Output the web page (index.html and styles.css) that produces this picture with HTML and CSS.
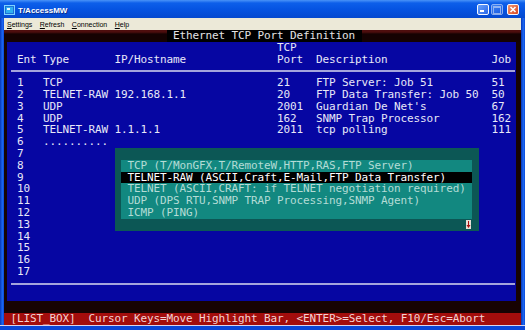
FILE: index.html
```html
<!DOCTYPE html>
<html lang="en">

<head>
    <meta charset="UTF-8">
    <meta name="viewport" content="width=device-width, initial-scale=1.0">
    <title>T/AccessMW</title>
    <link rel="stylesheet" href="styles.css">
</head>

<body>
    <div class="window">
        <div class="titlebar">
            <svg class="app-icon" viewBox="0 0 11 10">
                <rect x="0.5" y="0.5" width="10" height="9" fill="#1d6fd8" stroke="#7fd4ff" />
                <rect x="2" y="2" width="7" height="6" fill="#30b0f0" />
                <rect x="3" y="3" width="3" height="2" fill="#e8f6ff" />
            </svg>
            <span class="title">T/AccessMW</span>
            <div class="caption-buttons">
                <span class="cap-btn min"></span>
                <span class="cap-btn max"></span>
                <span class="cap-btn close">
                    <svg viewBox="0 0 10 9">
                        <path d="M2.5 2 L7.5 7 M7.5 2 L2.5 7" stroke="#fff" stroke-width="1.6" />
                    </svg>
                </span>
            </div>
        </div>

        <div class="body">
            <div class="frame-side"></div>
            <div class="client">
                <nav class="menubar">
                    <span><u>S</u>ettings</span>
                    <span><u>R</u>efresh</span>
                    <span><u>C</u>onnection</span>
                    <span><u>H</u>elp</span>
                </nav>

                <div class="console">
                    <div class="console-top">
                        <span class="screen-title">Ethernet TCP Port Definition</span>
                    </div>

                    <div class="panel">
                        <div class="cols head">
                            <span>Ent</span>
                            <span>Type</span>
                            <span>IP/Hostname</span>
                            <span>TCP<br>Port</span>
                            <span>Description</span>
                            <span>Job</span>
                        </div>
                        <div class="rule"></div>

                        <div class="entries">
                            <div class="cols"><span>1</span><span>TCP</span><span></span><span>21</span><span>FTP Server: Job 51</span><span>51</span></div>
                            <div class="cols"><span>2</span><span>TELNET-RAW</span><span>192.168.1.1</span><span>20</span><span>FTP Data Transfer: Job 50</span><span>50</span></div>
                            <div class="cols"><span>3</span><span>UDP</span><span></span><span>2001</span><span>Guardian De Net's</span><span>67</span></div>
                            <div class="cols"><span>4</span><span>UDP</span><span></span><span>162</span><span>SNMP Trap Processor</span><span>162</span></div>
                            <div class="cols"><span>5</span><span>TELNET-RAW</span><span>1.1.1.1</span><span>2011</span><span>tcp polling</span><span>111</span></div>
                            <div class="cols"><span>6</span><span>..........</span></div>
                            <div class="cols"><span>7</span></div>
                            <div class="cols"><span>8</span></div>
                            <div class="cols"><span>9</span></div>
                            <div class="cols"><span>10</span></div>
                            <div class="cols"><span>11</span></div>
                            <div class="cols"><span>12</span></div>
                            <div class="cols"><span>13</span></div>
                            <div class="cols"><span>14</span></div>
                            <div class="cols"><span>15</span></div>
                            <div class="cols"><span>16</span></div>
                            <div class="cols"><span>17</span></div>
                        </div>

                        <div class="rule"></div>
                        <div class="blank"></div>

                        <!-- type picker popup -->
                        <div class="listbox">
                            <div class="item">TCP (T/MonGFX,T/RemoteW,HTTP,RAS,FTP Server)</div>
                            <div class="item selected">TELNET-RAW (ASCII,Craft,E-Mail,FTP Data Transfer)</div>
                            <div class="item">TELNET (ASCII,CRAFT: if TELNET negotiation required)</div>
                            <div class="item">UDP (DPS RTU,SNMP TRAP Processing,SNMP Agent)</div>
                            <div class="item">ICMP (PING)</div>
                            <div class="listbox-foot">
                                <span class="scroll-arrow">
                                    <svg viewBox="0 0 5 9">
                                        <rect width="5" height="9" fill="#e6ded6" />
                                        <path d="M2 1 H3 V5 H4.5 L2.5 8 L0.5 5 H2 Z" fill="#a81010" />
                                    </svg>
                                </span>
                            </div>
                        </div>
                    </div>

                    <div class="console-shadow"></div>
                    <div class="status">[LIST_BOX]  Cursor Keys=Move Highlight Bar, &lt;ENTER&gt;=Select, F10/Esc=Abort</div>
                </div>
            </div>
            <div class="frame-side"></div>
        </div>
        <div class="frame-bottom"></div>
    </div>
</body>

</html>
```

FILE: styles.css
```css
* {
    margin: 0;
    padding: 0;
    box-sizing: border-box;
}

body {
    width: 525px;
    height: 330px;
    overflow: hidden;
    font-family: "Liberation Sans", Arial, sans-serif;
    background-color: #0a46d8;
}

.window {
    width: 525px;
    height: 330px;
    display: flex;
    flex-direction: column;
}

/* XP style caption */
.titlebar {
    height: 18px;
    display: flex;
    align-items: center;
    padding: 0 6px 0 4px;
    background: linear-gradient(#4a93f8 0, #0d5fea 3px, #0654e2 9px, #0549cf 100%);
    color: #fff;
}

.app-icon {
    width: 11px;
    height: 10px;
    margin-top: 2px;
}

.title {
    margin-left: 3px;
    padding-top: 2px;
    font-size: 8px;
    font-weight: bold;
    text-shadow: 1px 1px #0b2f8e;
}

.caption-buttons {
    margin-left: auto;
    display: flex;
    gap: 2px;
    margin-top: 1px;
}

.cap-btn {
    width: 12px;
    height: 11px;
    border: 1px solid #f4f8ff;
    border-radius: 2px;
    background: linear-gradient(135deg, #6aa2fa, #2866ea);
    display: flex;
    align-items: center;
    justify-content: center;
}

.cap-btn.min {
    align-items: flex-end;
    justify-content: flex-start;
    padding: 0 0 2px 2px;
}

.cap-btn.min::after {
    content: "";
    width: 4px;
    height: 2px;
    background: #fff;
}

.cap-btn.max {
    opacity: 0.55;
}

.cap-btn.max::after {
    content: "";
    width: 6px;
    height: 5px;
    border: 1px solid #fff;
    border-top-width: 2px;
}

.cap-btn.close {
    margin-left: 2px;
    background: linear-gradient(135deg, #f29670, #d9461f);
}

.cap-btn.close svg {
    width: 10px;
    height: 9px;
}

.body {
    flex: 1;
    display: flex;
}

.frame-side {
    width: 4px;
    background: linear-gradient(to right, #0636b8, #1c66f0 60%, #0a48d8);
}

.client {
    flex: 1;
    min-width: 0;
    display: flex;
    flex-direction: column;
}

.menubar {
    height: 12px;
    display: flex;
    align-items: center;
    gap: 7.5px;
    padding-left: 3px;
    background-color: #ece9d8;
    font-size: 7px;
    color: #000;
}

/* text mode screen: 6.5px x 11.8px cells */
.console {
    flex: 1;
    display: flex;
    flex-direction: column;
    background-color: #170303;
    font-family: "DejaVu Sans Mono", "Liberation Mono", monospace;
    font-size: 11px;
    letter-spacing: -0.12px;
    line-height: 11.4px;
    color: #e8e8f8;
}

.console-top {
    height: 11.8px;
    padding-left: 162.5px;
    background: linear-gradient(#4e0e0e 0, #4e0e0e 2px, #150202 4px);
}

.screen-title {
    display: inline-block;
    height: 11.8px;
    padding: 0 6.5px;
    background-color: #000;
    color: #e4e4e4;
}

.panel {
    position: relative;
    height: 259.6px;
    margin: 0 5px 0 3px;
    background-color: #0606a2;
}

.cols {
    display: grid;
    grid-template-columns: 26px 71.5px 162.5px 39px 175.5px 26px;
    height: 11.8px;
    padding-left: 10px;
}

.cols.head {
    height: 23.6px;
    align-items: end;
    line-height: 11.8px;
}

.rule {
    height: 11.8px;
    display: flex;
    align-items: center;
    padding: 0 1px 0 3.5px;
}

.rule::before {
    content: "";
    flex: 1;
    height: 2px;
    background-color: #a4a4dc;
}

.blank {
    height: 11.8px;
}

.listbox {
    position: absolute;
    top: 106.2px;
    left: 107.5px;
    width: 364px;
    padding: 11.8px 6.5px 0;
    background-color: #0c5755;
}

.item {
    height: 11.8px;
    padding-left: 6.5px;
    background-color: #128880;
    color: #b4dcd6;
}

.item.selected {
    background-color: #000;
    color: #fff;
}

.listbox-foot {
    height: 11.8px;
    display: flex;
    justify-content: flex-end;
}

.scroll-arrow {
    width: 6.5px;
    display: flex;
    align-items: center;
    justify-content: center;
}

.scroll-arrow svg {
    width: 5px;
    height: 9px;
}

.console-shadow {
    height: 11.8px;
}

.status {
    height: 11.8px;
    padding-left: 6.5px;
    white-space: pre;
    background-color: #a30d0c;
    color: #f4d2d2;
}

.frame-bottom {
    height: 5px;
    border-top: 1px solid #d8d4ec;
    background-color: #0a46d8;
}
```
